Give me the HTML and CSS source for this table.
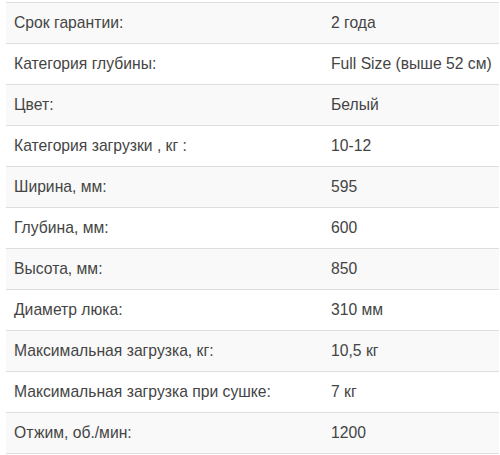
FILE: index.html
```html
<!DOCTYPE html>
<html lang="ru">
<head>
<meta charset="utf-8">
<link rel="stylesheet" href="styles.css">
</head>
<body>
<table class="specs">
  <colgroup>
    <col class="col-name">
    <col class="col-val">
  </colgroup>
  <tbody>
    <tr><td>Срок гарантии:</td><td>2 года</td></tr>
    <tr><td>Категория глубины:</td><td>Full Size (выше 52 см)</td></tr>
    <tr><td>Цвет:</td><td>Белый</td></tr>
    <tr><td>Категория загрузки , кг :</td><td>10-12</td></tr>
    <tr><td>Ширина, мм:</td><td>595</td></tr>
    <tr><td>Глубина, мм:</td><td>600</td></tr>
    <tr><td>Высота, мм:</td><td>850</td></tr>
    <tr><td>Диаметр люка:</td><td>310 мм</td></tr>
    <tr><td>Максимальная загрузка, кг:</td><td>10,5 кг</td></tr>
    <tr><td>Максимальная загрузка при сушке:</td><td>7 кг</td></tr>
    <tr><td>Отжим, об./мин:</td><td>1200</td></tr>
  </tbody>
</table>
</body>
</html>
```

FILE: styles.css
```css
html, body {
  margin: 0;
  padding: 0;
  background: #fff;
}
body {
  padding: 2px 1px 0 6px;
  font-family: "Liberation Sans", Arial, sans-serif;
  font-size: 15.7px;
  line-height: 20px;
  color: #444;
}
.specs {
  width: 493px;
  table-layout: fixed;
  border-collapse: collapse;
  border-spacing: 0;
  border-bottom: 1px solid #ddd;
}
.col-name {
  width: 317px;
}
.col-val {
  width: 176px;
}
.specs td {
  padding: 10px 8px;
  border-top: 1px solid #ddd;
  vertical-align: top;
  text-align: left;
  white-space: nowrap;
}
.specs tr:nth-child(odd) td {
  background: #f9f9f9;
}
```
